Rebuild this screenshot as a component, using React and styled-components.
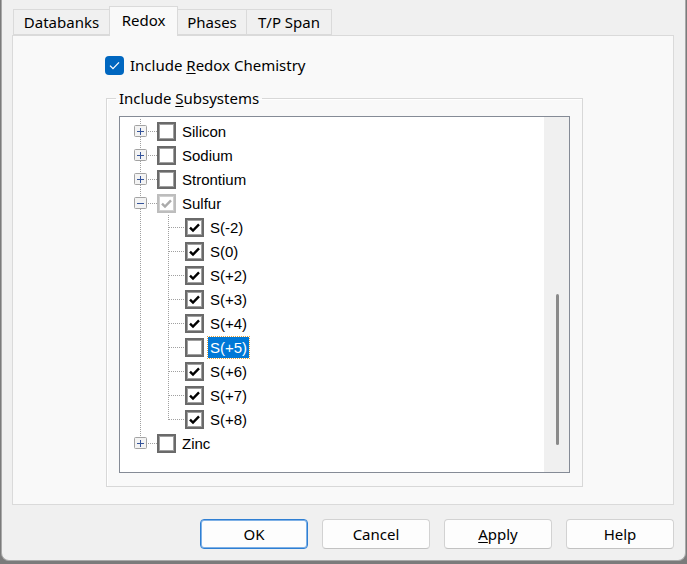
import styled, { createGlobalStyle } from 'styled-components';

const GlobalStyle = createGlobalStyle`
  html, body {
    margin: 0;
    padding: 0;
    background: #7b7b7b;
  }
  * {
    box-sizing: border-box;
  }
`;

const Screen = styled.div`
  width: 687px;
  height: 564px;
  overflow: hidden;
  background: #7b7b7b;
`;

const Window = styled.div`
  width: 685px;
  height: 561px;
  margin-left: 1px;
  background: #f0f0f0;
  border: 1px solid #a9a9a9;
  border-top: none;
  border-radius: 0 0 8px 8px;
  padding: 6px 11px 11px 10px;
  display: flex;
  flex-direction: column;
  font-family: 'Noto Sans', 'Liberation Sans', sans-serif;
  font-size: 15px;
  color: #000;
`;

const TabStrip = styled.div`
  display: flex;
  align-items: flex-end;
  height: 29px;
  padding-left: 1px;
`;

const Tab = styled.div`
  width: ${(p) => p.width}px;
  height: ${(p) => (p.active ? 30 : 26)}px;
  display: flex;
  align-items: center;
  justify-content: center;
  padding-bottom: ${(p) => (p.active ? 4 : 0)}px;
  background: ${(p) => (p.active ? '#f9f9f9' : '#f0f0f0')};
  border: 1px solid #dadada;
  border-bottom: ${(p) => (p.active ? 'none' : '1px solid #dadada')};
  margin-bottom: ${(p) => (p.active ? -1 : 0)}px;
  position: relative;
  z-index: ${(p) => (p.active ? 2 : 1)};
  & + & {
    margin-left: -1px;
  }
`;

const Panel = styled.div`
  height: 470px;
  background: #f9f9f9;
  border: 1px solid #dadada;
  padding: 19px 0 0 92px;
`;

const CheckRow = styled.label`
  display: flex;
  align-items: center;
  gap: 6px;
  height: 20px;
`;

const BlueBox = styled.span`
  width: 19px;
  height: 19px;
  border-radius: 4px;
  background: #0067c0;
  display: flex;
  align-items: center;
  justify-content: center;
`;

const U = styled.span`
  text-decoration: underline;
  text-underline-offset: 2px;
`;

const Group = styled.fieldset`
  margin: 14px 0 0 1px;
  width: 477px;
  height: 398px;
  border: 1px solid #d8d8d8;
  box-shadow: 1px 1px 0 #fff inset;
  padding: 9px 12px 0 12px;
`;

const Legend = styled.legend`
  margin-left: -3px;
  padding: 0 3px;
  line-height: 18px;
`;

const TreeBox = styled.div`
  width: 451px;
  height: 357px;
  background: #fff;
  border: 1px solid #858b96;
  display: flex;
`;

const TreeList = styled.div`
  flex: 1;
  padding-top: 2px;
  padding-left: 1px;
  font-family: 'Liberation Sans', Arial, sans-serif;
  font-size: 15px;
`;

const Row = styled.div`
  display: flex;
  align-items: center;
  height: 24px;
`;

const Box = styled.span`
  width: 19px;
  height: 19px;
  flex: none;
  border: 2px solid ${(p) => (p.dim ? '#bdbdbd' : '#6a6a6a')};
  box-shadow: inset 0 0 0 1px ${(p) => (p.dim ? '#d0d0d0' : '#a0a0a0')};
  background: #fff;
  display: flex;
  align-items: center;
  justify-content: center;
`;

const Label = styled.span`
  margin-left: 4px;
  padding: 0 2px;
  height: 21px;
  line-height: 21px;
  background: ${(p) => (p.selected ? '#0078d7' : 'transparent')};
  color: ${(p) => (p.selected ? '#fff' : '#000')};
  outline: ${(p) => (p.selected ? '1px dotted #e0a040' : 'none')};
`;

const ScrollTrack = styled.div`
  width: 25px;
  background: #f0f0f0;
  display: flex;
  flex-direction: column;
  align-items: center;
  padding-top: 177px;
`;

const Thumb = styled.div`
  width: 3px;
  height: 151px;
  border-radius: 2px;
  background: #8a8a8a;
  margin-left: 1px;
`;

const Buttons = styled.div`
  display: flex;
  justify-content: flex-end;
  gap: 14px;
  margin-top: 14px;
`;

const Button = styled.button`
  width: 108px;
  height: 30px;
  border-radius: 4px;
  background: #fdfdfd;
  border: 1px solid ${(p) => (p.primary ? '#2f7fd3' : '#d2d2d2')};
  border-bottom-color: ${(p) => (p.primary ? '#2f7fd3' : '#c2c2c2')};
  box-shadow: ${(p) => (p.primary ? 'inset 0 0 0 1px #7fb1e6' : 'none')};
  font-family: 'Noto Sans', 'Liberation Sans', sans-serif;
  font-size: 15px;
  color: #000;
  padding: 0;
`;

const Check = ({ color = '#000', width = 2.4 }) => (
  <svg width="13" height="13" viewBox="0 0 13 13">
    <path d="M2 6.6 L5 9.6 L11 3.4" fill="none" stroke={color} strokeWidth={width} />
  </svg>
);

const dots = { stroke: '#a0a0a0', strokeWidth: 1, strokeDasharray: '1 1', shapeRendering: 'crispEdges' };

const TopLines = ({ exp, last }) => (
  <svg width="36" height="24" style={{ flex: 'none' }}>
    <line x1="19.5" y1="0" x2="19.5" y2={last ? 12 : 24} {...dots} />
    <line x1="25" y1="12.5" x2="36" y2="12.5" {...dots} />
    <rect x="13.5" y="6.5" width="12" height="11" rx="1" fill="#f3f3f3" stroke="#a3a3a3" />
    <line x1="16" y1="12.5" x2="23" y2="12.5" stroke="#35549a" shapeRendering="crispEdges" />
    {exp === '+' && <line x1="19.5" y1="9" x2="19.5" y2="16" stroke="#35549a" shapeRendering="crispEdges" />}
  </svg>
);

const ChildLines = ({ last }) => (
  <svg width="64" height="24" style={{ flex: 'none' }}>
    <line x1="19.5" y1="0" x2="19.5" y2="24" {...dots} />
    <line x1="47.5" y1="0" x2="47.5" y2={last ? 13 : 24} {...dots} />
    <line x1="48" y1="12.5" x2="64" y2="12.5" {...dots} />
  </svg>
);

const items = [
  { label: 'Silicon', exp: '+' },
  { label: 'Sodium', exp: '+' },
  { label: 'Strontium', exp: '+' },
  { label: 'Sulfur', exp: '-', checked: true, dim: true },
  { label: 'S(-2)', child: true, checked: true },
  { label: 'S(0)', child: true, checked: true },
  { label: 'S(+2)', child: true, checked: true },
  { label: 'S(+3)', child: true, checked: true },
  { label: 'S(+4)', child: true, checked: true },
  { label: 'S(+5)', child: true, selected: true },
  { label: 'S(+6)', child: true, checked: true },
  { label: 'S(+7)', child: true, checked: true },
  { label: 'S(+8)', child: true, checked: true, last: true },
  { label: 'Zinc', exp: '+', last: true },
];

const tabs = [
  { name: 'Databanks', width: 97 },
  { name: 'Redox', width: 69, active: true },
  { name: 'Phases', width: 70 },
  { name: 'T/P Span', width: 86 },
];

export default function App() {
  return (
    <Screen>
      <GlobalStyle />
      <Window>
        <TabStrip>
          {tabs.map((t) => (
            <Tab key={t.name} width={t.width} active={t.active}>
              {t.name}
            </Tab>
          ))}
        </TabStrip>
        <Panel>
          <CheckRow>
            <BlueBox>
              <Check color="#fff" width={1.3} />
            </BlueBox>
            <span>
              Include <U>R</U>edox Chemistry
            </span>
          </CheckRow>
          <Group>
            <Legend>
              Include <U>S</U>ubsystems
            </Legend>
            <TreeBox>
              <TreeList>
                {items.map((it) => (
                  <Row key={it.label}>
                    {it.child ? <ChildLines last={it.last} /> : <TopLines exp={it.exp} last={it.last} />}
                    <Box dim={it.dim}>{it.checked && <Check color={it.dim ? '#ababab' : '#000'} />}</Box>
                    <Label selected={it.selected}>{it.label}</Label>
                  </Row>
                ))}
              </TreeList>
              <ScrollTrack>
                <Thumb />
              </ScrollTrack>
            </TreeBox>
          </Group>
        </Panel>
        <Buttons>
          <Button primary>OK</Button>
          <Button>Cancel</Button>
          <Button>
            <U>A</U>pply
          </Button>
          <Button>Help</Button>
        </Buttons>
      </Window>
    </Screen>
  );
}
